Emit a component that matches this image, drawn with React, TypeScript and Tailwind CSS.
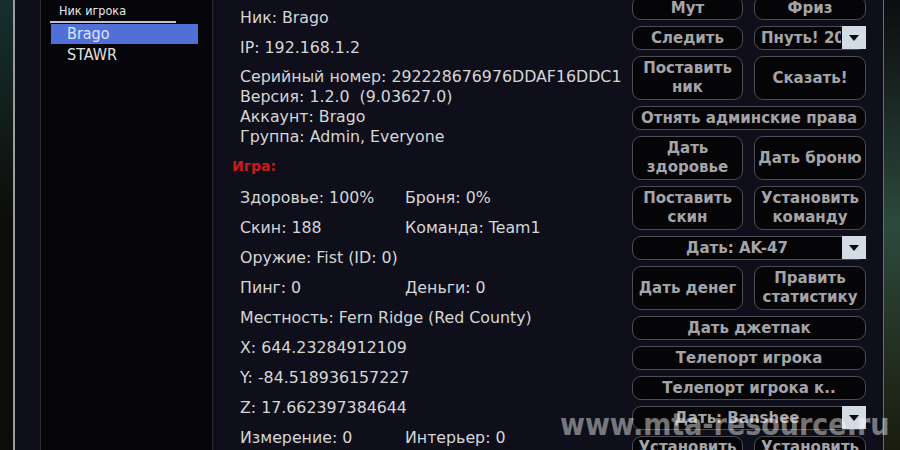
const info = "font-['DejaVu_Sans',sans-serif] text-[15.8px] text-[#d6d6d6]";

function Btn({ children, wide, tall, top }: { children: React.ReactNode; wide?: boolean; tall?: boolean; top?: boolean }) {
  return (
    <div
      className={`${wide ? 'col-span-2' : ''} ${tall ? 'h-[44px]' : 'h-[24px]'} flex ${top ? 'items-start pt-[1px]' : 'items-center'} justify-center rounded-[9px] border-[1.5px] border-[#4c4c54] bg-[#050507] text-center leading-[19px] whitespace-nowrap`}
    >
      {children}
    </div>
  );
}

function Drop({ label, wide, clip }: { label: string; wide?: boolean; clip?: boolean }) {
  return (
    <div
      className={`${wide ? 'col-span-2' : ''} relative h-[24px] flex items-center rounded-[9px] border-[1.5px] border-[#4c4c54] bg-[#050507] pr-[24px] ${clip ? 'pl-[6px] justify-start' : 'justify-center'}`}
    >
      <span className="whitespace-nowrap overflow-hidden">{label}</span>
      {/* arrow box */}
      <div className="absolute -right-[1px] -top-[1px] w-[24px] h-[23px] bg-[#d3dbe4] flex items-center justify-center">
        <svg width="10" height="6" viewBox="0 0 10 6">
          <path d="M0 0h10L5 6z" fill="#0a0a0a" />
        </svg>
      </div>
    </div>
  );
}

export default function App() {
  return (
    <div className="relative w-[900px] h-[450px] overflow-hidden flex bg-[#0b0c08]">
      {/* game world left */}
      <div className="w-[13px] bg-linear-to-b from-[#16302e] via-[#0c0d08] to-[#0d0e09]" />

      {/* window */}
      <div className="flex-1 flex border-l-2 border-r border-l-[#9c9ca0] border-r-[#6c6c72] bg-[#0e0f1a]">
        <div className="w-[25px]" />

        {/* player list */}
        <div className="w-[173px] border-x border-[#2c2c34] bg-[#05050a] font-['DejaVu_Sans_Condensed','DejaVu_Sans',sans-serif]">
          <div className="pl-[18px] pt-[3px] text-[12.5px] leading-[16px] text-[#e8e8e8]">Ник игрока</div>
          <div className="ml-[9px] mt-[2px] w-[126px] h-[2px] bg-[#c4c4c8]" />
          <div className="ml-[10px] mt-[1px] w-[147px] h-[20px] bg-[#5070d8] pl-[16px] text-[16px] leading-[20px] text-[#dfe5ff]">Brago</div>
          <div className="ml-[10px] pl-[16px] pt-[1px] text-[16px] leading-[20px] text-[#e2e2e2]">STAWR</div>
        </div>

        {/* info */}
        <div className={`flex-1 pl-[27px] pt-[3px] ${info}`}>
          <div className="h-[30px] flex items-center">Ник: Brago</div>
          <div className="h-[30px] flex items-center">IP: 192.168.1.2</div>
          <div className="mt-[4px]">
            <div className="h-[20px] flex items-center whitespace-nowrap">Серийный номер: 292228676976DDAF16DDC1</div>
            <div className="h-[20px] flex items-center whitespace-pre">Версия: 1.2.0  (9.03627.0)</div>
            <div className="h-[20px] flex items-center">Аккаунт: Brago</div>
            <div className="h-[20px] flex items-center">Группа: Admin, Everyone</div>
          </div>
          <div className="mt-[4px] h-[30px] flex items-center -ml-[8px] text-[14px] font-bold text-[#cc1a1a]">Игра:</div>
          <div className="mt-[2px]">
            <div className="h-[30px] flex items-center"><span className="w-[165px]">Здоровье: 100%</span><span>Броня: 0%</span></div>
            <div className="h-[30px] flex items-center"><span className="w-[165px]">Скин: 188</span><span>Команда: Team1</span></div>
            <div className="h-[30px] flex items-center">Оружие: Fist (ID: 0)</div>
            <div className="h-[30px] flex items-center"><span className="w-[165px]">Пинг: 0</span><span>Деньги: 0</span></div>
            <div className="h-[30px] flex items-center">Местность: Fern Ridge (Red County)</div>
            <div className="h-[30px] flex items-center">X: 644.23284912109</div>
            <div className="h-[30px] flex items-center">Y: -84.518936157227</div>
            <div className="h-[30px] flex items-center">Z: 17.662397384644</div>
            <div className="h-[30px] flex items-center"><span className="w-[165px]">Измерение: 0</span><span>Интерьер: 0</span></div>
          </div>
        </div>

        {/* actions */}
        <div className="w-[235px] -mt-[4px] mr-[16px] grid grid-cols-[111px_112px] gap-x-[11px] gap-y-[6px] content-start font-['DejaVu_Sans',sans-serif] text-[15px] font-bold text-[#a4a4a8]">
          <Btn>Мут</Btn>
          <Btn>Фриз</Btn>
          <Btn>Следить</Btn>
          <Drop label="Пнуть! 20" clip />
          <Btn tall>Поставить<br />ник</Btn>
          <Btn tall>Сказать!</Btn>
          <Btn wide>Отнять админские права</Btn>
          <Btn tall>Дать<br />здоровье</Btn>
          <Btn tall>Дать броню</Btn>
          <Btn tall>Поставить<br />скин</Btn>
          <Btn tall>Установить<br />команду</Btn>
          <Drop label="Дать: AK-47" wide />
          <Btn tall>Дать денег</Btn>
          <Btn tall>Править<br />статистику</Btn>
          <Btn wide>Дать джетпак</Btn>
          <Btn wide>Телепорт игрока</Btn>
          <Btn wide>Телепорт игрока к..</Btn>
          <Drop label="Дать: Banshee" wide />
          <Btn tall top>Установить<br />измерение</Btn>
          <Btn tall top>Установить<br />интерьер</Btn>
        </div>
      </div>

      {/* game world right */}
      <div className="w-[16px] bg-linear-to-b from-[#0c0d10] via-[#2c4a3c] to-[#1a1c0e]" />

      {/* watermark */}
      <div className="absolute left-[560px] top-[405px] font-['DejaVu_Sans_Condensed','DejaVu_Sans',sans-serif] text-[30px] font-bold leading-[40px] text-white/45 whitespace-nowrap">
        www.mta-resource.ru
      </div>
    </div>
  );
}
